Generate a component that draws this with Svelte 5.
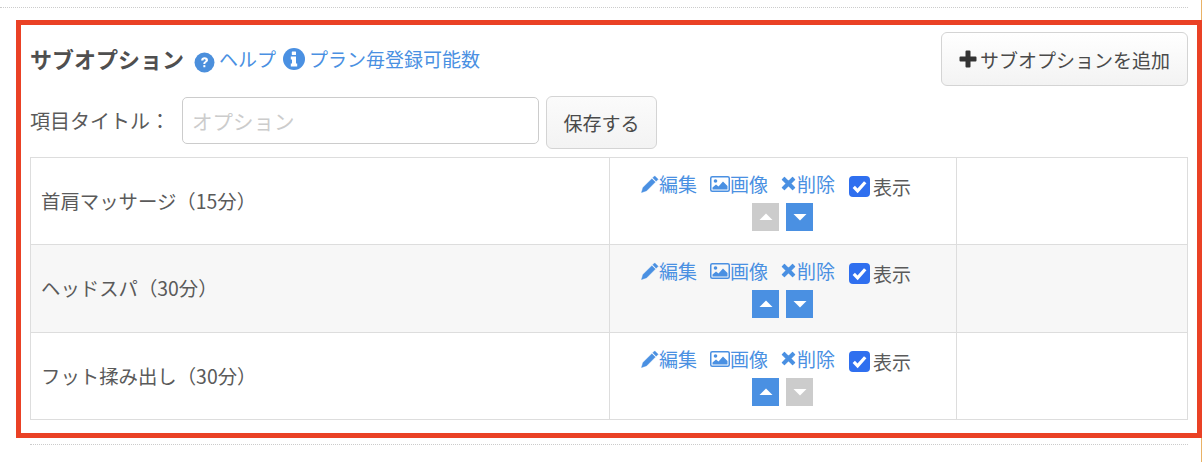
<script lang="ts">
  type Row = { name: string; upOn: boolean; downOn: boolean };

  const rows: Row[] = [
    { name: '首肩マッサージ（15分）', upOn: false, downOn: true },
    { name: 'ヘッドスパ（30分）', upOn: true, downOn: true },
    { name: 'フット揉み出し（30分）', upOn: true, downOn: false },
  ];
</script>

<div class="page">
  <div class="rule top"></div>

  <section class="box">
    <div class="head">
      <div class="head-left">
        <strong class="title">サブオプション</strong>
        <a class="link help" href="#help">
          <svg class="ico-help" viewBox="0 0 20 20" aria-hidden="true">
            <circle cx="10" cy="10" r="9.500" fill="#4b8fdc" />
            <path d="M6.800 8c0-1.900 1.400-2.900 3.300-2.900s3.200 1 3.200 2.600c0 1.300-.8 1.900-1.600 2.400-.6.400-.9.600-.9 1.300H8.900c0-1.300.4-1.900 1.300-2.400.6-.4.900-.7.900-1.200 0-.5-.4-.8-1-.8-.7 0-1.100.4-1.100 1.100z" fill="#fff" />
            <rect x="8.900" y="12.500" width="1.900" height="2" fill="#fff" />
          </svg>ヘルプ
        </a>
        <a class="link limit" href="#limit">
          <svg class="ico-info" viewBox="0 0 22 22" aria-hidden="true">
            <circle cx="11" cy="11" r="11" fill="#4a90e2" />
            <rect x="8.800" y="3.600" width="4.200" height="3.400" rx=".5" fill="#fff" />
            <path d="M7.800 8.600h5.200v6.800h1.200v3H7.800v-3H9v-3.800H7.800z" fill="#fff" />
          </svg>
          プラン毎登録可能数
        </a>
      </div>
      <button class="btn add" type="button">
        <svg class="ico-plus" viewBox="0 0 18 18" aria-hidden="true">
          <path d="M6.500 1.500a1 1 0 0 1 1-1h3a1 1 0 0 1 1 1v5h5a1 1 0 0 1 1 1v3a1 1 0 0 1-1 1h-5v5a1 1 0 0 1-1 1h-3a1 1 0 0 1-1-1v-5h-5a1 1 0 0 1-1-1v-3a1 1 0 0 1 1-1h5z" fill="#333" />
        </svg>サブオプションを追加
      </button>
    </div>

    <div class="title-form">
      <label for="item-title">項目タイトル：</label>
      <input id="item-title" type="text" placeholder="オプション" />
      <button class="btn save" type="button">保存する</button>
    </div>

    <table>
      <tbody>
        {#each rows as row}
          <tr>
            <td class="name">{row.name}</td>
            <td class="actions">
              <div class="action-line">
                <a class="link act" href="#edit">
                  <svg class="ico-pen" viewBox="0 0 16 16" aria-hidden="true">
                    <path d="M12.200 .8l3 3-1.700 1.700-3-3zM9.700 3.300l3 3-7.700 7.700-4.500 1.500 1.300-4.300z" fill="#4a90e2" stroke="#4a90e2" stroke-width=".4" />
                  </svg>編集
                </a>
                <a class="link act" href="#image">
                  <svg class="ico-img" viewBox="0 0 20 16" aria-hidden="true">
                    <rect x=".75" y=".75" width="18.500" height="14.500" rx="1.500" fill="none" stroke="#4a90e2" stroke-width="1.500" />
                    <circle cx="5.500" cy="5" r="1.800" fill="#4a90e2" />
                    <path d="M2.500 13.500v-2l3.500-3 2.500 2 4.500-5 4.500 4.500v3.500z" fill="#4a90e2" />
                  </svg>画像
                </a>
                <a class="link act" href="#delete">
                  <svg class="ico-x" viewBox="0 0 14 14" aria-hidden="true">
                    <path d="M3.200 1.300L7 5.100l3.800-3.800 2 2L9 7l3.800 3.800-2 2L7 9l-3.800 3.800-2-2L5 7 1.200 3.300z" fill="#4a90e2" stroke="#4a90e2" stroke-width="1" stroke-linejoin="round" />
                  </svg>削除
                </a>
                <label class="show">
                  <input type="checkbox" checked />
                  <span class="check" aria-hidden="true">
                    <svg viewBox="0 0 22 22">
                      <path d="M5 11.500l4 4 8-9" fill="none" stroke="#fff" stroke-width="3.400" />
                    </svg>
                  </span>表示
                </label>
              </div>
              <div class="move">
                <button class="arrow" class:off={!row.upOn} type="button" aria-label="上へ">
                  <svg viewBox="0 0 14 8"><path d="M7 0.500l6.500 6.500H.5z" fill="#fff" /></svg>
                </button>
                <button class="arrow" class:off={!row.downOn} type="button" aria-label="下へ">
                  <svg viewBox="0 0 14 8"><path d="M.5 1h13L7 7.500z" fill="#fff" /></svg>
                </button>
              </div>
            </td>
            <td class="blank"></td>
          </tr>
        {/each}
      </tbody>
    </table>
  </section>

  <div class="rule bottom"></div>
</div>

<style>
  :global(body) {
    margin: 0;
    background: #fff;
  }

  .page {
    width: 1204px;
    height: 462px;
    overflow: hidden;
    font-family: "Noto Sans CJK JP", "Liberation Sans", sans-serif;
    font-size: 19px;
    color: #5a5a5a;
    /* orange edge of the column, runs behind the red box */
    background: linear-gradient(#e9b266, #e9b266) no-repeat 1201px 0 / 1px 100%;
  }

  .rule {
    height: 0;
    border-top: 1px dotted #ccc;
  }

  .rule.top {
    margin: 7px 16px 12px 0;
  }

  .rule.bottom {
    margin: 6px 16px 0 30px;
  }

  .box {
    margin-left: 16px;
    width: 1186px;
    height: 418px;
    box-sizing: border-box;
    border: 5px solid #ea4125;
    padding: 7px 9px 0;
    background: #fff;
  }

  .head {
    display: flex;
    justify-content: space-between;
    align-items: flex-start;
  }

  .head-left {
    display: flex;
    align-items: center;
    margin-top: 11px;
    line-height: 32px;
  }

  .title {
    font-size: 22px;
    font-weight: 700;
    color: #4f4f4f;
    margin: -2px 10px 0 0;
  }

  .link {
    color: #4a90e2;
    text-decoration: none;
    display: inline-flex;
    align-items: center;
  }

  .help {
    margin-right: 7px;
  }

  .ico-help {
    width: 21px;
    height: 21px;
    margin: 7px 4px 0 0;
    filter: blur(.5px);
  }

  .ico-info {
    width: 22px;
    height: 22px;
    margin-right: 4px;
  }

  .btn {
    font: inherit;
    color: #4a4a4a;
    border: 1px solid #d4d4d4;
    border-radius: 6px;
    background: linear-gradient(#fff, #f3f3f3);
    padding: 0;
  }

  .add {
    display: flex;
    align-items: center;
    justify-content: center;
    width: 247px;
    height: 54px;
  }

  .ico-plus {
    width: 18px;
    height: 18px;
    margin-right: 3px;
  }

  .title-form {
    display: flex;
    align-items: flex-start;
    margin-top: 10px;
  }

  .title-form label {
    width: 152px;
    font-size: 20px;
    line-height: 47px;
    margin-top: 1px;
  }

  .title-form input {
    width: 357px;
    height: 47px;
    box-sizing: border-box;
    border: 1px solid #ccc;
    border-radius: 5px;
    padding: 0 9px;
    font: inherit;
    font-size: 20.500px;
    margin: 1px 7px 0 0;
  }

  .title-form input::placeholder {
    color: #ccc;
  }

  .save {
    width: 111px;
    height: 53px;
    background: linear-gradient(#fbfbfb, #f3f3f3);
  }

  table {
    width: 1158px;
    margin-top: 8px;
    border-collapse: collapse;
    table-layout: fixed;
  }

  td {
    border: 1px solid #ddd;
    padding: 0;
  }

  tr {
    height: 87px;
  }

  tr:nth-child(2) {
    height: 88px;
  }

  tr:nth-child(2) td {
    background: #f7f7f7;
  }

  td.name {
    width: 568px;
    padding: 0 0 2px 10px;
    font-size: 19.400px;
  }

  td.actions {
    width: 346px;
    vertical-align: top;
  }

  .action-line {
    display: flex;
    justify-content: center;
    align-items: center;
    margin-top: 11px;
    height: 32px;
    line-height: 26px;
    padding-right: 14px;
  }

  .act {
    margin-right: 13px;
    margin-top: -3px;
  }

  .ico-pen {
    width: 18px;
    height: 18px;
  }

  .ico-img {
    width: 20px;
    height: 16px;
  }

  .ico-x {
    width: 15px;
    height: 15px;
    margin-right: 1px;
  }

  .show {
    display: inline-flex;
    align-items: center;
    margin: 3px 0 0 1px;
  }

  .show input {
    display: none;
  }

  .check {
    width: 21px;
    height: 21px;
    border-radius: 4px;
    background: #2f6fef;
    margin-right: 3px;
    display: block;
  }

  .check svg {
    display: block;
    width: 21px;
    height: 21px;
  }

  .move {
    display: flex;
    justify-content: center;
    gap: 7px;
    margin-top: 2px;
    padding-right: 1px;
  }

  .arrow {
    width: 27px;
    height: 28px;
    padding: 0;
    border: 0;
    background: #4a90e2;
    display: flex;
    align-items: center;
    justify-content: center;
  }

  .arrow.off {
    background: #ccc;
  }

  .arrow svg {
    width: 14px;
    height: 8px;
  }
</style>
